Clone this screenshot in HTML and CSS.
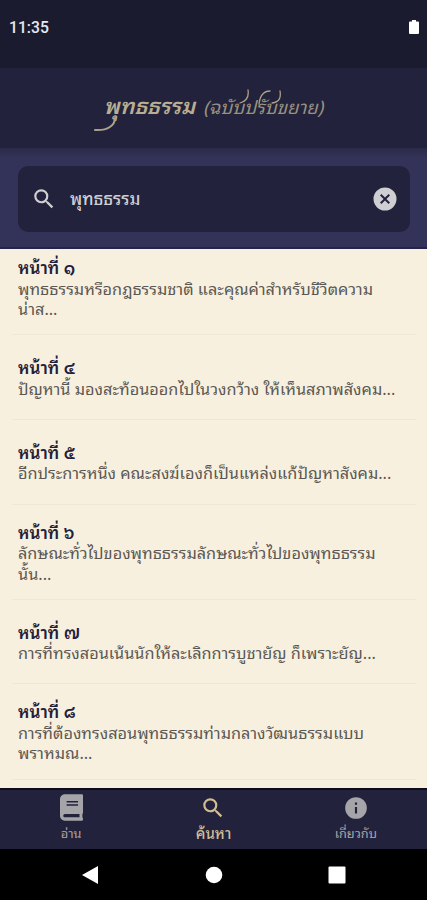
FILE: index.html
```
<!DOCTYPE html>
<html lang="th">
<head>
    <meta charset="UTF-8">
    <meta name="viewport" content="width=device-width, initial-scale=1.0">
    <title>พุทธธรรม</title>
    <link rel="stylesheet" href="styles.css">
</head>
<body>
    <div class="app">
        <div class="status-bar">
            <span>11:35</span>
            <svg class="battery" viewBox="0 0 10 14"><path d="M3 0h4v1.500h2a1 1 0 0 1 1 1V13a1 1 0 0 1-1 1H1a1 1 0 0 1-1-1V2.500a1 1 0 0 1 1-1h2z"/></svg>
        </div>

        <header class="header">
            <h1 class="title">
                <span class="title-main">พุทธธรรม</span>
                <span class="title-sub">(ฉบับปรับขยาย)</span>
                <!-- Flourishes around the title -->
                <svg class="flourish" viewBox="0 0 240 50">
                    <path d="M21 33c0 7-7 13-20 12" stroke-width="2"/>
                    <path d="M146 18c7-2 9-7 8-13M165 19c1-8 4-13 11-13M178 18c8-1 9-6 8-12"/>
                </svg>
            </h1>
        </header>

        <div class="search">
            <div class="search-box">
                <svg class="search-icon" viewBox="0 0 24 24"><path d="M15.500 14h-.79l-.28-.27A6.470 6.470 0 0 0 16 9.500 6.500 6.500 0 1 0 9.500 16c1.610 0 3.090-.59 4.230-1.570l.27.28v.79l5 4.990L20.490 19l-4.990-5zm-6 0a4.500 4.500 0 1 1 0-9 4.500 4.500 0 0 1 0 9z"/></svg>
                <span class="search-text">พุทธธรรม</span>
                <svg class="clear-icon" viewBox="0 0 24 24"><path d="M12 .5a11.500 11.500 0 1 0 0 23 11.500 11.500 0 0 0 0-23zm5 15.090L15.590 17 12 13.410 8.410 17 7 15.590 10.590 12 7 8.410 8.410 7 12 10.590 15.590 7 17 8.410 13.410 12z"/></svg>
            </div>
        </div>

        <main class="results">
            <div class="result">
                <h2>หน้าที่ ๑</h2>
                <p>พุทธธรรมหรือกฎธรรมชาติ และคุณค่าสำหรับชีวิตความ<br>น่าส...</p>
            </div>
            <div class="result">
                <h2>หน้าที่ ๔</h2>
                <p>ปัญหานี้ มองสะท้อนออกไปในวงกว้าง ให้เห็นสภาพสังคม...</p>
            </div>
            <div class="result">
                <h2>หน้าที่ ๕</h2>
                <p>อีกประการหนึ่ง คณะสงฆ์เองก็เป็นแหล่งแก้ปัญหาสังคม...</p>
            </div>
            <div class="result">
                <h2>หน้าที่ ๖</h2>
                <p>ลักษณะทั่วไปของพุทธธรรมลักษณะทั่วไปของพุทธธรรม<br>นั้น...</p>
            </div>
            <div class="result">
                <h2>หน้าที่ ๗</h2>
                <p>การที่ทรงสอนเน้นนักให้ละเลิกการบูชายัญ ก็เพราะยัญ...</p>
            </div>
            <div class="result">
                <h2>หน้าที่ ๘</h2>
                <p>การที่ต้องทรงสอนพุทธธรรมท่ามกลางวัฒนธรรมแบบ<br>พราหมณ...</p>
            </div>
        </main>

        <nav class="tabs">
            <div class="tab">
                <svg class="book-icon" viewBox="0 0 448 512"><path d="M448 360V24c0-13.300-10.700-24-24-24H96C43 0 0 43 0 96v320c0 53 43 96 96 96h328c13.300 0 24-10.700 24-24v-16c0-7.500-3.500-14.300-8.900-18.700-4.200-15.400-4.200-59.300 0-74.700 5.400-4.300 8.900-11.100 8.900-18.600zM128 134c0-3.300 2.700-6 6-6h212c3.300 0 6 2.700 6 6v20c0 3.300-2.700 6-6 6H134c-3.300 0-6-2.700-6-6v-20zm0 64c0-3.300 2.700-6 6-6h212c3.300 0 6 2.700 6 6v20c0 3.300-2.700 6-6 6H134c-3.300 0-6-2.700-6-6v-20zm253.400 250H96c-17.700 0-32-14.300-32-32 0-17.600 14.400-32 32-32h285.400c-1.900 17.100-1.900 46.900 0 64z"/></svg>
                <span>อ่าน</span>
            </div>
            <div class="tab active">
                <svg class="tab-icon" viewBox="0 0 24 24"><path d="M15.500 14h-.79l-.28-.27A6.470 6.470 0 0 0 16 9.500 6.500 6.500 0 1 0 9.500 16c1.610 0 3.090-.59 4.230-1.570l.27.28v.79l5 4.990L20.490 19l-4.990-5zm-6 0a4.500 4.500 0 1 1 0-9 4.500 4.500 0 0 1 0 9z"/></svg>
                <span>ค้นหา</span>
            </div>
            <div class="tab">
                <svg class="tab-icon" viewBox="0 0 24 24"><path d="M12 2a10 10 0 1 0 0 20 10 10 0 0 0 0-20zm1 15h-2v-6h2v6zm0-8h-2V7h2v2z"/></svg>
                <span>เกี่ยวกับ</span>
            </div>
        </nav>

        <div class="system-nav">
            <svg viewBox="0 0 20 20"><path d="M2 10 18 1v18z"/></svg>
            <svg viewBox="0 0 20 20"><circle cx="10" cy="10" r="8.300"/></svg>
            <svg viewBox="0 0 20 20"><rect x="1.500" y="1.500" width="17" height="17" rx="1"/></svg>
        </div>
    </div>
</body>
</html>
```
FILE: styles.css
```
* {
    box-sizing: border-box;
}

body {
    margin: 0;
    font-family: "Noto Sans Thai Looped", "Loma", "Noto Serif Thai", "Noto Sans", "Noto Sans Thai", sans-serif;
    background: #000;
}

h1, h2, p {
    margin: 0;
}

svg {
    display: block;
    fill: currentColor;
}

.app {
    display: flex;
    flex-direction: column;
    height: 900px;
    overflow: hidden;
}

.status-bar {
    display: flex;
    justify-content: space-between;
    align-items: center;
    height: 68px;
    padding: 0 8px 14px 9px;
    background: #1a1b2e;
    color: #e8e8ee;
    font-family: Roboto, sans-serif;
    font-size: 15.7px;
    font-weight: 500;
}

.battery {
    width: 10px;
    height: 14px;
    color: #fff;
}

.header {
    display: flex;
    justify-content: center;
    align-items: center;
    height: 80px;
    padding-bottom: 5px;
    background: #22223d;
}

.title {
    position: relative;
    display: flex;
    align-items: baseline;
    gap: 8px;
    font-style: italic;
    line-height: 30px;
    white-space: nowrap;
}

.title-main {
    font-size: 21.8px;
    font-weight: 600;
    color: #b9ae92;
}

.title-sub {
    font-size: 18.5px;
    font-weight: 400;
    color: #98917f;
}

.flourish {
    position: absolute;
    left: -10px;
    top: -5px;
    width: 240px;
    height: 50px;
    fill: none;
    stroke: #aaa188;
    stroke-width: 1.3;
    stroke-linecap: round;
}

.search {
    height: 101px;
    padding: 18px 17px 0 18px;
    background: linear-gradient(#2a2a48, #333359 10px);
    border-bottom: 2px solid #25234b;
}

.search-box {
    display: flex;
    align-items: center;
    height: 66px;
    padding: 0 13px;
    border-radius: 10px;
    background: #22223d;
    color: #cfcfd3;
}

.search-icon {
    width: 26px;
    height: 26px;
}

.search-text {
    flex: 1;
    padding: 0 0 3px 13px;
    font-size: 17.1px;
    font-weight: 500;
}

.clear-icon {
    width: 24px;
    height: 24px;
}

.results {
    flex: 1;
    min-height: 0;
    padding: 0 11px 0 12px;
    overflow: hidden;
    background: #f8f0df;
}

.result {
    display: flex;
    flex-direction: column;
    justify-content: center;
    min-height: 84.7px;
    padding: 17px 0 15.7px 6px;
    border-bottom: 1px solid #eee8d9;
    line-height: 20.5px;
    white-space: nowrap;
}

/* The list is scrolled a little past its top */
.result:first-child {
    margin-top: -9px;
}

.result h2 {
    font-size: 17px;
    font-weight: 600;
    line-height: 20.5px;
    color: #22203a;
}

.result p {
    font-size: 16.3px;
    color: #5b5853;
}

.tabs {
    display: grid;
    grid-template-columns: repeat(3, 1fr);
    height: 61px;
    border-top: 2px solid #0d0d1c;
    background: #22223d;
}

.tab {
    display: flex;
    flex-direction: column;
    align-items: center;
    justify-content: flex-end;
    padding-bottom: 7px;
    color: #a5a5a9;
    font-size: 12.8px;
    line-height: 20px;
}

.tab.active {
    color: #d0bd96;
    font-size: 15px;
    font-weight: 500;
}

.tab-icon {
    width: 26px;
    height: 26px;
    margin-bottom: 1px;
}

.book-icon {
    width: 23px;
    height: 27px;
    margin-bottom: 1px;
}

.system-nav {
    display: flex;
    justify-content: space-between;
    align-items: center;
    height: 51px;
    padding: 0 80px;
    background: #000;
    color: #fff;
}

.system-nav svg {
    width: 20px;
    height: 20px;
}
```
